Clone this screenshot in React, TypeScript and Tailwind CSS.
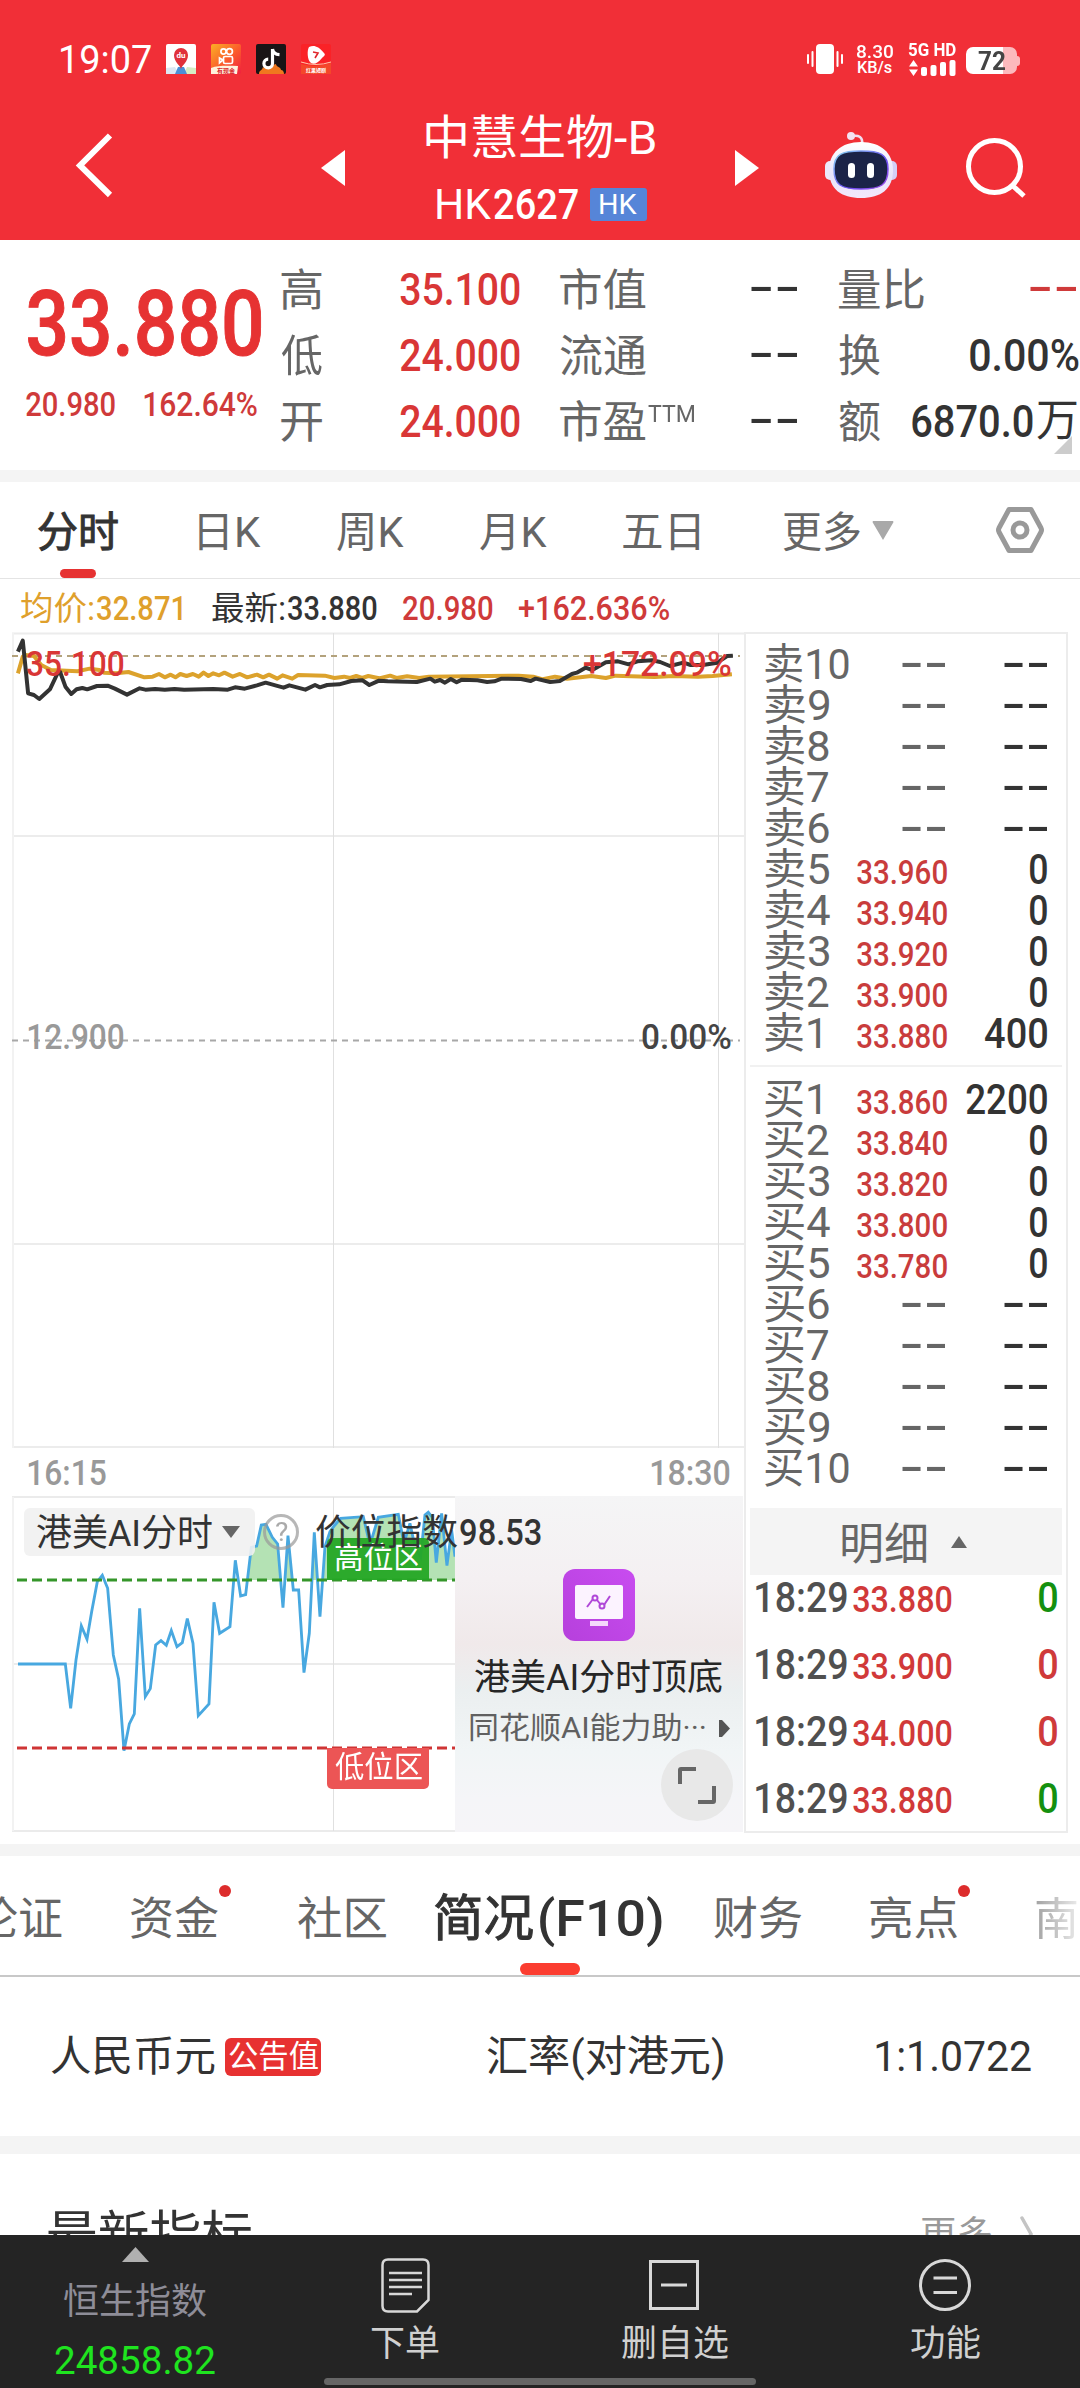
import { useLayoutEffect, useRef, useState } from 'react';
import type { ReactNode } from 'react';

/* Text whose ink is condensed or widened to fill the width of its box. */
function Fit({ children, className = '' }: { children: string; className?: string }) {
  const box = useRef<HTMLSpanElement>(null);
  const [transform, setTransform] = useState('none');
  useLayoutEffect(() => {
    const el = box.current;
    const ctx = document.createElement('canvas').getContext('2d');
    if (!el || !ctx) return;
    const cs = getComputedStyle(el);
    ctx.font = `${cs.fontWeight} ${cs.fontSize} ${cs.fontFamily}`;
    const m = ctx.measureText(children);
    const s = el.clientWidth / (m.actualBoundingBoxLeft + m.actualBoundingBoxRight);
    setTransform(`translateX(${m.actualBoundingBoxLeft * s}px) scaleX(${s})`);
  }, [children]);
  return (
    <span ref={box} className={`block shrink-0 leading-none whitespace-nowrap ${className}`}>
      <span className="inline-block origin-left" style={{ transform }}>
        {children}
      </span>
    </span>
  );
}

function Dash({ className = '' }: { className?: string }) {
  return (
    <Fit className={`-translate-y-[4px] font-['Liberation_Sans'] text-[52px] !leading-[40px] ${className}`}>--</Fit>
  );
}

function StatusBar() {
  return (
    <div className="flex h-[90px] items-start pt-[44px] text-white">
      <Fit className="-mt-[3px] ml-[61px] w-[90px] text-[38px]">19:07</Fit>
      <div className="ml-[15px] flex gap-[15px]">
        <svg className="size-[30px]" viewBox="0 0 30 30">
          <rect width="30" height="30" rx="2" fill="#fff" />
          <path d="M0 24l9-1 4 7H0z" fill="#dce8f4" />
          <path d="M30 24l-9-1-3 7h12z" fill="#d6ecc4" />
          <path d="M12 23h6l3 7H9z" fill="#4b8fd6" />
          <path d="M15 25c-1-4-7-7-7-14a7 7 0 0114 0c0 7-6 10-7 14z" fill="#e0313a" />
          <text x="15" y="14" textAnchor="middle" fontSize="8" fontWeight="700" fill="#fff" fontFamily="Roboto">du</text>
        </svg>
        <svg className="size-[30px]" viewBox="0 0 30 30">
          <defs>
            <linearGradient id="ks" x1="0" y1="0" x2="1" y2="1">
              <stop offset="0" stopColor="#fbb025" />
              <stop offset=".55" stopColor="#fb5a2c" />
              <stop offset="1" stopColor="#f0203f" />
            </linearGradient>
          </defs>
          <rect width="30" height="30" rx="2" fill="url(#ks)" />
          <g fill="none" stroke="#fff" strokeWidth="1.7">
            <circle cx="12.5" cy="7.5" r="2.6" />
            <circle cx="18.5" cy="7.5" r="2.9" />
            <rect x="12.5" y="12.5" width="9" height="7" rx="1.5" />
            <path d="M12 16l-3.500-2v5z" />
          </g>
          <path d="M0 24c8-3 18-2 27-2l-1 8H0z" fill="#fff2dc" />
          <text x="15" y="29" textAnchor="middle" fontSize="6" fontWeight="700" fill="#d8262c" fontFamily="Noto Sans CJK SC">有现金</text>
        </svg>
        <svg className="size-[30px]" viewBox="0 0 30 30">
          <rect width="30" height="30" rx="2" fill="#191416" />
          <path d="M3 30c0-4 3-3 4-7 2 2 3 1 5-1 3 3 5-2 8-2 0 3 5 3 5 6 2 0 3 2 3 4z" fill="#f0781f" />
          <path d="M16.500 5v14.500a4.300 4.300 0 11-4.300-4.300M16.500 5c.5 4 3 5.500 7 5.700" fill="none" stroke="#fff" strokeWidth="3.200" />
        </svg>
        <svg className="size-[30px]" viewBox="0 0 30 30">
          <rect width="30" height="30" rx="2" fill="#fa2227" />
          <path d="M0 20q15 4 30-1v11H0z" fill="#f4472a" />
          <path d="M8 3c5-2 9-1 15 6 2 2 0 3-2 5-4 5-8 7-11 5C6 16 6 6 8 3z" fill="#fff" />
          <path d="M12 8l5 1-3 5M14 14l3-5" fill="none" stroke="#e0262b" strokeWidth="1.600" />
          <path d="M0 18q15 5 30 0" fill="none" stroke="#ffc9a8" strokeWidth="1" />
          <text x="15" y="28" textAnchor="middle" fontSize="5" fontWeight="700" fill="#fff" fontFamily="Noto Sans CJK SC">红果短剧</text>
        </svg>
      </div>
      <svg className="ml-[476px] h-[30px] w-[36px]" viewBox="0 0 36 30">
        <rect x="9" width="18" height="30" rx="4" fill="#fff" />
        <path d="M1 11v8M5.500 8v14M30.500 8v14M35 11v8" stroke="#fff" strokeWidth="2" strokeLinecap="round" />
      </svg>
      <div className="ml-[13px] flex flex-col">
        <Fit className="-mt-[2px] w-[37px] text-[19px] font-medium">8.30</Fit>
        <Fit className="-mt-px ml-[2px] w-[34px] text-[16px] font-medium">KB/s</Fit>
      </div>
      <div className="ml-[15px] -mt-[4px] flex flex-col">
        <Fit className="w-[48px] text-[19px] font-bold">5G HD</Fit>
        <svg className="mt-[1px] h-[16px] w-[48px]" viewBox="0 0 48 16" fill="#fff">
          <path d="M5.500 0l4.500 6.500H1zM5.500 16L1 9.500h9z" />
          <rect x="13" y="7" width="6" height="9" rx="2" />
          <rect x="22.500" y="5" width="6" height="11" rx="2" />
          <rect x="32" y="2" width="6" height="14" rx="2" />
          <rect x="41.500" y="0" width="6" height="16" rx="2" />
        </svg>
      </div>
      <div className="relative mt-[3px] ml-[10px] flex h-[27px] w-[51px] items-center overflow-visible rounded-[7px] bg-[linear-gradient(90deg,#fff_0_37px,#fcb9bd_37px)] after:absolute after:-right-[3px] after:h-[10px] after:w-[3px] after:rounded-r-sm after:bg-[#fcb9bd]">
        <Fit className="ml-[12px] w-[27px] text-[26px] font-bold text-[#444]">72</Fit>
      </div>
    </div>
  );
}

function Robot() {
  return (
    <svg className="ml-[66px] h-[66px] w-[72px]" viewBox="825 132 72 66">
      <defs>
        <linearGradient id="head" x1="0" y1="0" x2="0" y2="1">
          <stop offset="0" stopColor="#ffffff" />
          <stop offset=".6" stopColor="#e8e4fa" />
          <stop offset="1" stopColor="#f3e7fb" />
        </linearGradient>
        <linearGradient id="rim" x1="0" y1="0" x2="1" y2="1">
          <stop offset="0" stopColor="#8ad8f2" />
          <stop offset=".6" stopColor="#6a4df0" />
          <stop offset="1" stopColor="#a24de8" />
        </linearGradient>
      </defs>
      <path d="M852 136c7-1 11 1 10 8" fill="none" stroke="#f0dff0" strokeWidth="2.600" />
      <circle cx="851" cy="136" r="4" fill="#f4e3f2" />
      <rect x="825" y="161" width="12" height="19" rx="5" fill="#ece9fb" />
      <rect x="885" y="161" width="12" height="19" rx="5" fill="#d4cff6" />
      <path d="M861 142c20 0 32 11 32 28 0 19-12 28-32 28s-32-9-32-28c0-17 12-28 32-28z" fill="url(#head)" />
      <path d="M861 151c19 0 27 3 27 18 0 16-7 20-27 20s-27-4-27-20c0-15 8-18 27-18z" fill="#1b2347" stroke="url(#rim)" strokeWidth="1.500" />
      <rect x="848" y="163" width="7" height="15" rx="3.500" fill="#fff" />
      <rect x="867" y="163" width="7" height="15" rx="3.500" fill="#fff" />
    </svg>
  );
}

function TitleBar() {
  return (
    <div className="flex h-[150px] items-start pt-[24px] text-white">
      <svg className="mt-[17px] ml-[74px] h-[68px] w-[42px]" viewBox="74 131 42 68">
        <path d="M110 135.500L80 165.500L110 195" fill="none" stroke="#fff" strokeWidth="6" />
      </svg>
      <svg className="mt-[36px] ml-[205px] h-[36px] w-[24px]" viewBox="0 0 24 36">
        <path d="M24 0v36L0 18z" fill="#fff" />
      </svg>
      <div className="ml-[81px] flex w-[229px] flex-col">
        <Fit className="w-[229px] text-[47px]">中慧生物-B</Fit>
        <div className="mt-[22px] ml-[11px] flex items-center">
          <Fit className="w-[54px] text-[43px]">HK</Fit>
          <Fit className="ml-[3px] w-[84px] text-[43px] font-medium">2627</Fit>
          <div className="ml-[12px] flex h-[33px] w-[57px] items-center justify-center rounded-[3px] bg-[#5685d8]">
            <Fit className="w-[37px] text-[28px]">HK</Fit>
          </div>
        </div>
      </div>
      <svg className="mt-[36px] ml-[80px] h-[36px] w-[24px]" viewBox="0 0 24 36">
        <path d="M0 0v36l24-18z" fill="#fff" />
      </svg>
      <div className="mt-[18px] flex">
        <Robot />
        <svg className="mt-[4px] ml-[67px] h-[62px] w-[66px]" viewBox="964 136 66 62">
          <circle cx="994.500" cy="166.500" r="26" fill="none" stroke="#fff" strokeWidth="5" />
          <path d="M1013 186l11 10" stroke="#fff" strokeWidth="5" />
        </svg>
      </div>
    </div>
  );
}

function Quote() {
  const label = 'mt-[4px] text-[44px] text-[#666]';
  const red = 'ml-auto w-[120px] text-[45px] font-medium text-[#d93636]';
  return (
    <section className="flex h-[230px] pt-[16px]">
      <div className="w-[281px] shrink-0 pl-[26px]">
        <Fit className="mt-[24px] ml-[2px] w-[233px] text-[90px] font-medium text-[#e63232] [-webkit-text-stroke:1px_currentColor]">33.880</Fit>
        <div className="mt-[17px] flex text-[34px] font-medium text-[#cf3a3a]">
          <Fit className="w-[89px]">20.980</Fit>
          <Fit className="ml-[29px] w-[113px]">162.64%</Fit>
        </div>
      </div>
      <div className="flex w-[239px] shrink-0 flex-col">
        <div className="flex h-[66px] items-center">
          <Fit className={`w-[41px] ${label}`}>高</Fit>
          <Fit className={red}>35.100</Fit>
        </div>
        <div className="flex h-[66px] items-center">
          <Fit className={`w-[41px] ${label}`}>低</Fit>
          <Fit className={red}>24.000</Fit>
        </div>
        <div className="flex h-[66px] items-center">
          <Fit className={`w-[41px] ${label}`}>开</Fit>
          <Fit className={red}>24.000</Fit>
        </div>
      </div>
      <div className="ml-[40px] flex w-[237px] shrink-0 flex-col">
        <div className="flex h-[66px] items-center">
          <Fit className={`w-[86px] ${label}`}>市值</Fit>
          <Dash className="ml-auto w-[46px] text-[#333]" />
        </div>
        <div className="flex h-[66px] items-center">
          <Fit className={`w-[86px] ${label}`}>流通</Fit>
          <Dash className="ml-auto w-[46px] text-[#333]" />
        </div>
        <div className="flex h-[66px] items-center">
          <Fit className={`w-[86px] ${label}`}>市盈</Fit>
          <Fit className="-mt-[14px] ml-[2px] w-[46px] text-[24px] text-[#666]">TTM</Fit>
          <Dash className="ml-auto w-[46px] text-[#333]" />
        </div>
      </div>
      <div className="relative ml-[42px] flex w-[241px] shrink-0 flex-col">
        <div className="flex h-[66px] items-center">
          <Fit className={`w-[85px] ${label}`}>量比</Fit>
          <Dash className="mr-[4px] ml-auto w-[46px] text-[#cf3a3a]" />
        </div>
        <div className="flex h-[66px] items-center">
          <Fit className={`w-[41px] ${label}`}>换</Fit>
          <Fit className="mr-px ml-auto w-[109px] text-[45px] font-medium text-[#333]">0.00%</Fit>
        </div>
        <div className="flex h-[66px] items-center">
          <Fit className={`w-[41px] ${label}`}>额</Fit>
          <Fit className="ml-auto w-[121px] text-[45px] font-medium text-[#333]">6870.0</Fit>
          <Fit className="mr-[3px] ml-[4px] w-[40px] text-[44px] text-[#333]">万</Fit>
        </div>
        <svg className="absolute right-[8px] bottom-[16px] size-[18px]" viewBox="0 0 18 18">
          <path d="M18 0v18H0z" fill="#ccc" />
        </svg>
      </div>
    </section>
  );
}

function PeriodTabs() {
  return (
    <nav className="relative flex h-[97px] items-center border-b border-[#e4e4e4] text-[42px] text-[#666]">
      <Fit className="mt-[5px] ml-[38px] w-[80px] text-[#333] [-webkit-text-stroke:1px_currentColor]">分时</Fit>
      <Fit className="mt-[5px] ml-[81px] w-[62px]">日K</Fit>
      <Fit className="mt-[5px] ml-[76px] w-[67px]">周K</Fit>
      <Fit className="mt-[5px] ml-[76px] w-[67px]">月K</Fit>
      <Fit className="mt-[5px] ml-[76px] w-[76px]">五日</Fit>
      <Fit className="mt-[5px] ml-[84px] w-[77px]">更多</Fit>
      <svg className="ml-[12px] h-[19px] w-[22px]" viewBox="0 0 22 19">
        <path d="M1 0h20q1 1 0 2L11 19 1 2q-1-1 0-2z" fill="#a9a9a9" />
      </svg>
      <svg className="ml-[101px] h-[48px] w-[50px]" viewBox="995 506 50 48" fill="none" stroke="#999" strokeWidth="5" strokeLinejoin="round">
        <path d="M1009 509.500h22l10 18.500q1 2 0 4l-10 18.500h-22l-10-18.500q-1-2 0-4z" />
        <circle cx="1020" cy="530" r="7" />
      </svg>
      <span className="absolute bottom-0 left-[60px] h-[9px] w-[36px] rounded-full bg-[#e63232]" />
    </nav>
  );
}

function InfoLine() {
  return (
    <div className="flex h-[54px] items-center pt-[4px] text-[33px] font-medium text-[#cf3a3a]">
      <Fit className="ml-[21px] w-[72px] font-normal text-[#dfa02c]">均价:</Fit>
      <Fit className="ml-[4px] w-[85px] text-[#dfa02c]">32.871</Fit>
      <Fit className="ml-[30px] w-[72px] font-normal text-[#333]">最新:</Fit>
      <Fit className="ml-[4px] w-[89px] text-[#333]">33.880</Fit>
      <Fit className="ml-[26px] w-[90px]">20.980</Fit>
      <Fit className="ml-[26px] w-[150px]">+162.636%</Fit>
    </div>
  );
}

const PRICE =
  '37,155 47,122 58,280 70,285 81,297 103,268 118,222 124,216 135,260 147,282 158,268 170,264 180,268 200,258 222,257 237,266 262,284 288,265 300,269 320,267 340,269 360,267 380,269 440,267 470,269 485,262 505,266 530,256 548,248 570,257 585,263 597,256 630,269 650,255 660,262 675,255 700,253 725,243 748,241 762,255 782,242 800,244 860,246 888,236 897,245 908,240 918,248 930,237 942,247 953,239 985,241 1005,246 1020,244 1035,236 1075,237 1095,243 1105,236 1135,246 1155,243 1180,222 1190,218 1208,203 1222,210 1250,187 1275,184 1297,193 1315,184 1345,181 1362,186 1382,198 1410,188 1425,195 1450,195 1480,188 1500,168 1512,167';
const AVERAGE =
  '37,220 47,170 52,165 70,168 85,195 105,210 160,214 185,206 205,210 215,218 240,220 265,216 298,232 315,230 328,222 340,232 352,224 362,232 372,222 385,228 398,222 410,230 420,218 430,228 440,220 452,226 463,218 480,230 495,222 510,232 530,224 543,232 555,224 572,236 583,226 603,236 615,225 670,227 690,234 710,230 722,234 735,228 747,234 760,228 782,235 805,227 818,234 840,229 865,234 885,230 1070,227 1100,230 1120,238 1145,230 1170,236 1220,228 1250,234 1270,227 1350,231 1390,228 1440,230 1470,228 1510,223';
const POSITION_TAIL =
  '754,352 770,348 784,285 798,283 817,322 833,342 849,533 864,317 880,480 896,480 912,728 928,610 943,307 960,560 975,350 990,305 1005,285 1022,265 1090,260 1110,345 1135,262 1195,253 1212,340 1230,280 1245,350 1262,380 1275,255 1285,247 1297,262 1309,398 1325,250 1341,407 1355,300 1365,380';
const POSITION =
  '54,702 196,702 212,835 228,690 244,588 261,628 275,545 292,455 307,436 323,475 340,675 356,748 372,962 388,882 403,852 419,535 436,800 451,776 467,645 483,632 499,646 514,602 531,650 547,638 562,566 579,640 595,857 627,822 642,517 659,610 690,590 706,391 722,498 737,494 ' +
  POSITION_TAIL;

function PriceChart() {
  return (
    <div className="relative h-[816px]">
      <svg className="block h-[816px] w-[745px]" viewBox="0 632 745 816" fill="none">
        <g stroke="#ececec" strokeWidth="2">
          <path d="M12 633.500h732M12 836h732M12 1244h732M12 1447h732" />
          <path d="M13 633v815" stroke="#f2f2f2" />
          <path d="M333.500 633v815M718.500 633v815" stroke="#e0e0e0" strokeWidth="1" />
        </g>
        <path d="M12 656h728" stroke="#b3a27c" strokeWidth="2" strokeDasharray="6 5" />
        <path d="M12 1040.500h728" stroke="#a8a8a8" strokeWidth="2" strokeDasharray="6 5" />
        <g transform="translate(0 600) scale(.4847 .3333)" strokeLinejoin="round">
          <polyline points={AVERAGE} stroke="#dca22c" strokeWidth="4" vectorEffect="non-scaling-stroke" />
          <polyline points={PRICE} stroke="#333" strokeWidth="4" vectorEffect="non-scaling-stroke" />
        </g>
      </svg>
      <Fit className="absolute top-[15px] left-[27px] w-[97px] text-[35px] font-medium text-[#d93636]">35.100</Fit>
      <Fit className="absolute top-[15px] left-[584px] w-[147px] text-[35px] font-medium text-[#d93636]">+172.09%</Fit>
      <Fit className="absolute top-[388px] left-[28px] w-[96px] text-[35px] font-medium text-[#999]">12.900</Fit>
      <Fit className="absolute top-[388px] left-[642px] w-[89px] text-[35px] font-medium text-[#444]">0.00%</Fit>
    </div>
  );
}

function PositionChart() {
  return (
    <div className="relative flex h-[336px]">
      <svg className="block h-[336px] w-[455px] shrink-0" viewBox="0 1496 455 336" fill="none">
        <defs>
          <clipPath id="above">
            <rect x="0" y="0" width="1365" height="450" />
          </clipPath>
        </defs>
        <path d="M12 1497h443M12 1664h443M12 1831h443" stroke="#ebebeb" strokeWidth="2" />
        <path d="M13 1497v334" stroke="#f2f2f2" strokeWidth="2" />
        <path d="M333.500 1497v334" stroke="#e0e0e0" />
        <g transform="translate(0 1430) scale(.3333)">
          <polygon points={`737,494 ${POSITION_TAIL} 1365,450 737,450`} fill="#b4e2b4" clipPath="url(#above)" />
          <polyline points={POSITION} stroke="#48a8e0" strokeWidth="8.500" />
        </g>
        <path d="M17 1580h438" stroke="#35962a" strokeWidth="3" strokeDasharray="10 5" />
        <path d="M17 1748h438" stroke="#cf3535" strokeWidth="3" strokeDasharray="10 5" />
      </svg>
      <div className="absolute top-[42px] left-[327px] flex h-[42px] w-[102px] items-center justify-center rounded-t-[5px] bg-[#25a625]/95">
        <Fit className="mb-[2px] w-[87px] text-[30px] text-white">高位区</Fit>
      </div>
      <div className="absolute top-[252px] left-[327px] flex h-[41px] w-[102px] items-center justify-center rounded-b-[5px] bg-[#ec5555]">
        <Fit className="mb-[3px] w-[87px] text-[30px] text-white">低位区</Fit>
      </div>
      <div className="flex w-[288px] shrink-0 flex-col items-center bg-[linear-gradient(180deg,#f5f5f6_0%,#f4f0f2_25%,#f0e9ea_44%,#ebeff0_58%,#f1f5f6_76%,#f5f5f8_90%,#f6f5f8_100%)] pt-[73px]">
        <svg className="size-[72px]" viewBox="0 0 72 72">
          <defs>
            <linearGradient id="app" x1="1" y1="0" x2="0" y2="1">
              <stop offset="0" stopColor="#c84cf0" />
              <stop offset="1" stopColor="#b640dc" />
            </linearGradient>
          </defs>
          <rect width="72" height="72" rx="12" fill="url(#app)" />
          <rect x="12" y="16" width="48" height="34" rx="2" fill="#fcf3ff" />
          <rect x="27" y="52" width="18" height="5" fill="#f4d8fb" />
          <g fill="none" stroke="#b048d8" strokeWidth="2">
            <path d="M24 38l6-8M34 31l4 5M41 36l6-9" />
            <circle cx="32" cy="29" r="2.500" />
            <circle cx="39" cy="37" r="2.500" />
          </g>
        </svg>
        <Fit className="mt-[19px] mr-px w-[247px] text-[36px] text-[#262626]">港美AI分时顶底</Fit>
        <div className="mt-[17px] ml-[15px] flex items-center self-start">
          <Fit className="w-[235px] text-[30px] text-[#606060]">同花顺AI能力助···</Fit>
          <svg className="ml-[14px] h-[17px] w-[11px]" viewBox="0 0 11 17">
            <path d="M0 0l3 0 8 8.500-8 8.500H0z" fill="#555" />
          </svg>
        </div>
      </div>
      <svg className="absolute top-[253px] left-[661px] size-[72px]" viewBox="661 1749 72 72" fill="none" stroke="#666" strokeWidth="4">
        <circle cx="697" cy="1785" r="36" fill="#e8e8e8" stroke="none" />
        <path d="M680 1784v-14q0-1 1-1h15M698 1802h15q1 0 1-1v-15" />
      </svg>
      <div className="absolute top-[12px] left-[24px] flex h-[48px] w-[231px] items-center rounded-[6px] bg-[#f1f1f1]/90">
        <Fit className="mt-[2px] ml-[13px] w-[175px] text-[37px] text-[#333]">港美AI分时</Fit>
        <svg className="ml-[10px] h-[12px] w-[18px]" viewBox="0 0 18 12">
          <path d="M0 0h18L9 12z" fill="#666" />
        </svg>
      </div>
      <div className="absolute top-[18px] left-[263px] flex size-[36px] items-center justify-center rounded-full border-[3px] border-[#999]/70">
        <Fit className="w-[13px] text-[26px] text-[#aaa]">?</Fit>
      </div>
      <div className="absolute top-[19px] left-[316px] flex text-[36px] text-[#333]">
        <Fit className="w-[141px]">价位指数</Fit>
        <Fit className="ml-[3px] w-[81px] font-medium">98.53</Fit>
      </div>
    </div>
  );
}

type Level = { name: string; nameWidth: string; price?: string; vol?: string; volWidth?: string };

const SELL: Level[] = [
  { name: '卖10', nameWidth: 'w-[84px]' },
  { name: '卖9', nameWidth: 'w-[64px]' },
  { name: '卖8', nameWidth: 'w-[64px]' },
  { name: '卖7', nameWidth: 'w-[63px]' },
  { name: '卖6', nameWidth: 'w-[64px]' },
  { name: '卖5', nameWidth: 'w-[64px]', price: '33.960', vol: '0', volWidth: 'w-[17px]' },
  { name: '卖4', nameWidth: 'w-[65px]', price: '33.940', vol: '0', volWidth: 'w-[17px]' },
  { name: '卖3', nameWidth: 'w-[64px]', price: '33.920', vol: '0', volWidth: 'w-[17px]' },
  { name: '卖2', nameWidth: 'w-[64px]', price: '33.900', vol: '0', volWidth: 'w-[17px]' },
  { name: '卖1', nameWidth: 'w-[55px]', price: '33.880', vol: '400', volWidth: 'w-[62px]' },
];
const BUY: Level[] = [
  { name: '买1', nameWidth: 'w-[55px]', price: '33.860', vol: '2200', volWidth: 'w-[81px]' },
  { name: '买2', nameWidth: 'w-[64px]', price: '33.840', vol: '0', volWidth: 'w-[17px]' },
  { name: '买3', nameWidth: 'w-[64px]', price: '33.820', vol: '0', volWidth: 'w-[17px]' },
  { name: '买4', nameWidth: 'w-[65px]', price: '33.800', vol: '0', volWidth: 'w-[17px]' },
  { name: '买5', nameWidth: 'w-[64px]', price: '33.780', vol: '0', volWidth: 'w-[17px]' },
  { name: '买6', nameWidth: 'w-[64px]' },
  { name: '买7', nameWidth: 'w-[63px]' },
  { name: '买8', nameWidth: 'w-[64px]' },
  { name: '买9', nameWidth: 'w-[64px]' },
  { name: '买10', nameWidth: 'w-[84px]' },
];

function Levels({ rows }: { rows: Level[] }) {
  return (
    <>
      {rows.map((r) => (
        <div key={r.name} className="grid h-[41px] grid-cols-[88px_94px_100px] grid-rows-[41px] items-center pl-[19px]">
          <Fit className={`text-[42px] !leading-[41px] text-[#666] ${r.nameWidth}`}>{r.name}</Fit>
          {r.price ? (
            <Fit className="mt-[4px] ml-[4px] w-[90px] text-[34px] font-medium text-[#c93c3c]">{r.price}</Fit>
          ) : (
            <Dash className="ml-[49px] w-[43px] text-[#666]" />
          )}
          {r.vol ? (
            <Fit className={`justify-self-end text-[42px] !leading-[41px] font-medium text-[#333] ${r.volWidth}`}>{r.vol}</Fit>
          ) : (
            <Dash className="w-[43px] justify-self-end text-[#333]" />
          )}
        </div>
      ))}
    </>
  );
}

const TICKS = [
  { price: '33.880', color: 'text-[#14900f]' },
  { price: '33.900', color: 'text-[#cf3a3a]' },
  { price: '34.000', color: 'text-[#cf3a3a]' },
  { price: '33.880', color: 'text-[#14900f]' },
];

function OrderBook() {
  return (
    <aside className="h-[1201px] w-[324px] border-2 border-[#ececec]">
      <div className="h-[431px] pt-[10px]">
        <Levels rows={SELL} />
      </div>
      <div className="mx-[4px] h-[2px] bg-[#f1f1f1]" />
      <div className="h-[441px] pt-[12px]">
        <Levels rows={BUY} />
      </div>
      <div className="mx-[4px] flex h-[67px] items-center bg-[#f4f4f4]">
        <Fit className="mt-[7px] ml-[92px] w-[84px] text-[44px] text-[#666]">明细</Fit>
        <svg className="ml-[25px] h-[12px] w-[16px]" viewBox="0 0 16 12">
          <path d="M0 12h16L8 0z" fill="#666" />
        </svg>
      </div>
      <div className="-mt-[11px]">
        {TICKS.map((t, i) => (
          <div key={i} className="flex h-[67px] items-center">
            <Fit className="ml-[10px] w-[91px] text-[42px] font-medium text-[#505050]">18:29</Fit>
            <Fit className="mt-[4px] ml-[6px] w-[99px] text-[37px] font-medium text-[#d13939]">{t.price}</Fit>
            <Fit className={`ml-[87px] w-[18px] text-[42px] font-medium ${t.color}`}>0</Fit>
          </div>
        ))}
      </div>
    </aside>
  );
}

function Dotted({ children }: { children: ReactNode }) {
  return (
    <span className="relative block">
      {children}
      <span className="absolute -top-[12px] -right-[13px] size-[12px] rounded-full bg-[#dd2c2c]" />
    </span>
  );
}

function SectionTabs() {
  return (
    <nav className="relative flex h-[121px] items-center overflow-hidden border-b-2 border-[#c8c8c8] pt-[7px] text-[45px] text-[#666]">
      <Fit className="-ml-[26px] w-[88px]">论证</Fit>
      <div className="ml-[69px]">
        <Dotted>
          <Fit className="w-[87px]">资金</Fit>
        </Dotted>
      </div>
      <Fit className="ml-[80px] w-[88px]">社区</Fit>
      <Fit className="ml-[49px] w-[98px] text-[50px] text-[#333] [-webkit-text-stroke:1px_currentColor]">简况</Fit>
      <Fit className="ml-[7px] w-[122px] text-[50px] font-medium text-[#333]">(F10)</Fit>
      <Fit className="ml-[52px] w-[88px]">财务</Fit>
      <div className="ml-[68px]">
        <Dotted>
          <Fit className="w-[87px]">亮点</Fit>
        </Dotted>
      </div>
      <Fit className="ml-[79px] w-[41px] [mask-image:linear-gradient(90deg,rgba(0,0,0,.6),rgba(0,0,0,.15))]">南</Fit>
      <span className="absolute bottom-0 left-[520px] h-[12px] w-[60px] rounded-[6px] bg-[#fb3d30]" />
    </nav>
  );
}

function BottomBar() {
  const item = 'text-[36px] text-[#d0d0d0]';
  return (
    <footer className="relative flex h-[153px] bg-[#242424]">
      <div className="flex w-[270px] flex-col items-center pt-[12px]">
        <svg className="h-[15px] w-[27px]" viewBox="0 0 27 15">
          <path d="M13.500 0L27 15H0z" fill="#b0b0b0" />
        </svg>
        <Fit className="mt-[22px] w-[142px] text-[36px] text-[#8e8d98]">恒生指数</Fit>
        <Fit className="mt-[22px] w-[160px] text-[39px] text-[#1fe41f]">24858.82</Fit>
      </div>
      <div className="flex w-[270px] flex-col items-center pt-[23px]">
        <svg className="h-[55px] w-[49px]" viewBox="0 0 49 55" fill="none" stroke="#d8d8d8" strokeWidth="2.500">
          <path d="M7 1.500h35q5.500 0 5.500 5.500v35l-11.500 11.500H7q-5.500 0-5.500-5.500V7q0-5.500 5.500-5.500z" />
          <path d="M8 15h33M8 22h33M8 29h33M8 36h23" />
        </svg>
        <Fit className={`mt-[13px] w-[68px] ${item}`}>下单</Fit>
      </div>
      <div className="flex w-[270px] flex-col items-center pt-[25px]">
        <svg className="mr-[2px] h-[50px] w-[50px]" viewBox="0 0 50 50" fill="none" stroke="#d8d8d8" strokeWidth="3">
          <path d="M1.500 1.500h47v47h-47zM12 25h26" />
        </svg>
        <Fit className={`mt-[16px] w-[106px] ${item}`}>删自选</Fit>
      </div>
      <div className="flex w-[270px] flex-col items-center pt-[24px]">
        <svg className="size-[52px]" viewBox="0 0 52 52" fill="none" stroke="#d8d8d8" strokeWidth="3">
          <circle cx="26" cy="26" r="24.500" />
          <path d="M14.500 19H38M14.500 33.500H38" />
        </svg>
        <Fit className={`mt-[15px] w-[69px] ${item}`}>功能</Fit>
      </div>
      <span className="absolute bottom-[3px] left-[324px] h-[7px] w-[432px] rounded-full bg-[#666]" />
    </footer>
  );
}

export default function App() {
  return (
    <main className="flex h-[2388px] w-[1080px] flex-col overflow-hidden bg-white font-['Roboto','Noto_Sans_CJK_SC',sans-serif]">
      <header className="h-[240px] shrink-0 bg-[#f12f37]">
        <StatusBar />
        <TitleBar />
      </header>
      <Quote />
      <div className="h-[12px] shrink-0 bg-[#f4f4f4]" />
      <PeriodTabs />
      <InfoLine />
      <div className="-mt-px flex shrink-0">
        <div className="w-[744px] shrink-0">
          <PriceChart />
          <div className="flex h-[48px] items-center pt-[2px] text-[35px] font-medium text-[#999]">
            <Fit className="ml-[28px] w-[78px]">16:15</Fit>
            <Fit className="ml-[545px] w-[79px]">18:30</Fit>
          </div>
          <PositionChart />
        </div>
        <OrderBook />
      </div>
      <div className="mt-[11px] h-[12px] shrink-0 bg-[#f4f4f4]" />
      <SectionTabs />
      <section className="flex h-[159px] shrink-0 items-center text-[42px] text-[#333]">
        <Fit className="ml-[51px] w-[164px]">人民币元</Fit>
        <div className="ml-[10px] flex h-[38px] w-[96px] items-center justify-center rounded-[6px] bg-[#e73131]">
          <Fit className="w-[89px] text-[31px] text-white">公告值</Fit>
        </div>
        <Fit className="ml-[166px] w-[236px]">汇率(对港元)</Fit>
        <Fit className="ml-[153px] w-[155px] text-[43px]">1:1.0722</Fit>
      </section>
      <div className="h-[18px] shrink-0 bg-[#f4f4f4]" />
      <section className="flex h-[81px] shrink-0 items-start overflow-hidden pt-[57px]">
        <Fit className="ml-[48px] w-[203px] text-[53px] text-[#333]">最新指标</Fit>
        <Fit className="mt-[6px] ml-[670px] w-[70px] text-[37px] text-[#999]">更多</Fit>
        <svg className="mt-[5px] ml-[29px] h-[36px] w-[14px]" viewBox="0 0 14 36">
          <path d="M2 2l9 16-9 16" fill="none" stroke="#c4c4c4" strokeWidth="3.500" strokeLinecap="round" />
        </svg>
      </section>
      <BottomBar />
    </main>
  );
}
